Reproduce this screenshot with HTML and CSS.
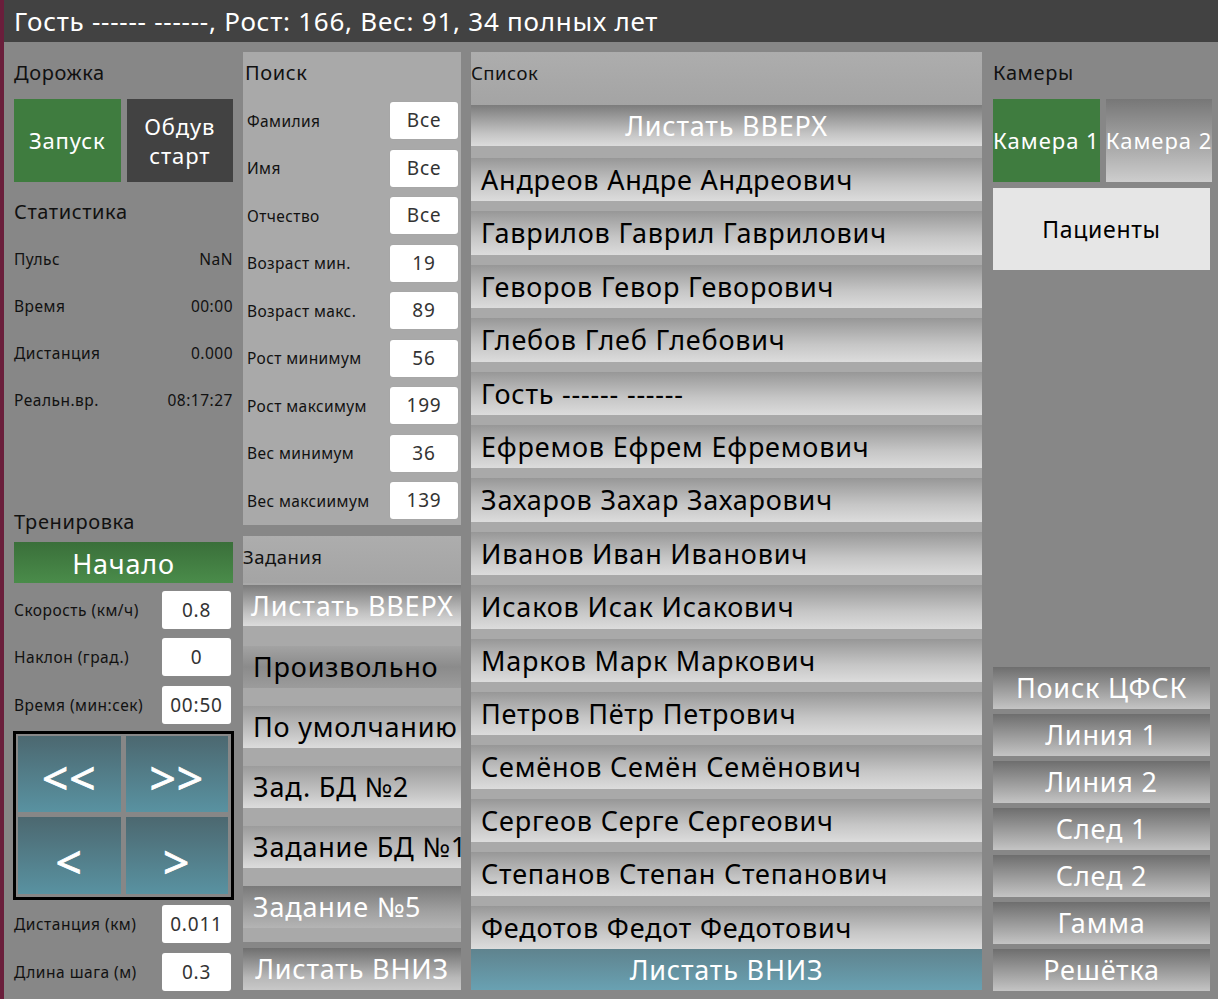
FILE: index.html
```html
<!DOCTYPE html>
<html lang="ru">
<head>
<meta charset="utf-8">
<title>Дорожка</title>
<link rel="stylesheet" href="styles.css">
</head>
<body>
<div class="app">
  <div class="topbar">Гость ------ ------, Рост: 166, Вес: 91, 34 полных лет</div>
  <div class="main">
    <div class="col col1">
      <div class="sect-title">Дорожка</div>
      <div class="btn-pair">
        <div class="btn green">Запуск</div>
        <div class="btn dark">Обдув<br>старт</div>
      </div>
      <div class="sect-title stat-title">Статистика</div>
      <div class="stat"><span>Пульс</span><span>NaN</span></div>
      <div class="stat"><span>Время</span><span>00:00</span></div>
      <div class="stat"><span>Дистанция</span><span>0.000</span></div>
      <div class="stat"><span>Реальн.вр.</span><span>08:17:27</span></div>
      <div class="sect-title train-title">Тренировка</div>
      <div class="start-btn">Начало</div>
      <div class="field"><span>Скорость (км/ч)</span><div class="input">0.8</div></div>
      <div class="field"><span>Наклон (град.)</span><div class="input">0</div></div>
      <div class="field"><span>Время (мин:сек)</span><div class="input">00:50</div></div>
      <div class="pad">
        <div class="pad-btn">&lt;&lt;</div>
        <div class="pad-btn">&gt;&gt;</div>
        <div class="pad-btn low">&lt;</div>
        <div class="pad-btn low">&gt;</div>
      </div>
      <div class="field"><span>Дистанция (км)</span><div class="input">0.011</div></div>
      <div class="field"><span>Длина шага (м)</span><div class="input">0.3</div></div>
    </div>

    <div class="col col2">
      <div class="panel search">
        <div class="panel-title">Поиск</div>
        <div class="srow"><span>Фамилия</span><div class="input">Все</div></div>
        <div class="srow"><span>Имя</span><div class="input">Все</div></div>
        <div class="srow"><span>Отчество</span><div class="input">Все</div></div>
        <div class="srow"><span>Возраст мин.</span><div class="input">19</div></div>
        <div class="srow"><span>Возраст макс.</span><div class="input">89</div></div>
        <div class="srow"><span>Рост минимум</span><div class="input">56</div></div>
        <div class="srow"><span>Рост максимум</span><div class="input">199</div></div>
        <div class="srow"><span>Вес минимум</span><div class="input">36</div></div>
        <div class="srow"><span>Вес максиимум</span><div class="input">139</div></div>
      </div>
      <div class="panel tasks">
        <div class="panel-head">Задания</div>
        <div class="scroll-btn task-up">Листать ВВЕРХ</div>
        <div class="task-items">
          <div class="task dim">Произвольно</div>
          <div class="task">По умолчанию</div>
          <div class="task">Зад. БД №2</div>
          <div class="task">Задание БД №1</div>
          <div class="task dark-task">Задание №5</div>
        </div>
      </div>
      <div class="scroll-btn task-down">Листать ВНИЗ</div>
    </div>

    <div class="col col3">
      <div class="panel-head list-head">Список</div>
      <div class="scroll-btn list-up">Листать ВВЕРХ</div>
      <div class="list">
        <div class="row">Андреов Андре Андреович</div>
        <div class="row">Гаврилов Гаврил Гаврилович</div>
        <div class="row">Геворов Гевор Геворович</div>
        <div class="row">Глебов Глеб Глебович</div>
        <div class="row">Гость ------ ------</div>
        <div class="row">Ефремов Ефрем Ефремович</div>
        <div class="row">Захаров Захар Захарович</div>
        <div class="row">Иванов Иван Иванович</div>
        <div class="row">Исаков Исак Исакович</div>
        <div class="row">Марков Марк Маркович</div>
        <div class="row">Петров Пётр Петрович</div>
        <div class="row">Семёнов Семён Семёнович</div>
        <div class="row">Сергеов Серге Сергеович</div>
        <div class="row">Степанов Степан Степанович</div>
        <div class="row">Федотов Федот Федотович</div>
      </div>
      <div class="list-down">Листать ВНИЗ</div>
    </div>

    <div class="col col4">
      <div class="sect-title">Камеры</div>
      <div class="btn-pair cams">
        <div class="btn green">Камера 1</div>
        <div class="btn grad">Камера 2</div>
      </div>
      <div class="patients">Пациенты</div>
      <div class="tools">
        <div class="tool">Поиск ЦФСК</div>
        <div class="tool">Линия 1</div>
        <div class="tool">Линия 2</div>
        <div class="tool">След 1</div>
        <div class="tool">След 2</div>
        <div class="tool">Гамма</div>
        <div class="tool">Решётка</div>
      </div>
    </div>
  </div>
  <div class="edge-arrow"></div>
</div>
</body>
</html>
```

FILE: styles.css
```css
* { box-sizing: border-box; }
html, body { margin: 0; padding: 0; }
body {
  font-family: "Noto Sans", "Open Sans", "DejaVu Sans", sans-serif;
  background: #878787;
  color: #111;
}
.app {
  position: relative;
  width: 1218px;
  height: 999px;
  border-left: 4px solid #6a1e3b;
  background: #878787;
  overflow: hidden;
}
.topbar {
  height: 42px;
  background: #424242;
  color: #fff;
  font-size: 26px;
  letter-spacing: 0.75px;
  line-height: 42px;
  padding-left: 10px;
  white-space: nowrap;
}
.main {
  display: grid;
  grid-template-columns: 219px 218px 511px 218px;
  column-gap: 10px;
  padding: 10px 0 0 10px;
  height: 957px;
}
.col { display: flex; flex-direction: column; min-width: 0; }

/* column 1 */
.sect-title {
  height: 47px;
  font-size: 20px;
  letter-spacing: 0.6px;
  line-height: 42px;
  white-space: nowrap;
}
.btn-pair {
  display: flex;
  gap: 6px;
  height: 83px;
}
.btn {
  flex: 1;
  display: flex;
  align-items: center;
  justify-content: center;
  text-align: center;
  color: #fff;
  font-size: 22px;
  letter-spacing: 0.9px;
  line-height: 29px;
  white-space: nowrap;
}
.green { background: #3f7c3f; }
.dark { background: #424242; }
.grad { background: linear-gradient(#777777, #cdcdcd); }
.stat-title {
  height: 53px;
  padding-top: 7px;
  line-height: 46px;
}
.stat {
  height: 47px;
  display: flex;
  justify-content: space-between;
  align-items: center;
  font-size: 15.5px;
  letter-spacing: 0.5px;
}
.train-title {
  margin-top: 77px;
  height: 42px;
  line-height: 44px;
}
.start-btn {
  height: 41px;
  background: linear-gradient(#3a6f3a, #4a8c4a);
  color: #fff;
  font-size: 27px;
  letter-spacing: 0.8px;
  line-height: 44px;
  text-align: center;
}
.field {
  height: 47.5px;
  display: flex;
  justify-content: space-between;
  align-items: center;
  font-size: 15.5px;
  letter-spacing: 0.5px;
  white-space: nowrap;
}
.input {
  width: 69px;
  height: 38px;
  background: #fff;
  border-radius: 3px;
  box-shadow: 0 0 1px #9a9a9a;
  color: #333;
  font-size: 19px;
  letter-spacing: 0.8px;
  line-height: 38px;
  text-align: center;
  margin-right: 2px;
}
.start-btn + .field { margin-top: 3px; }
.pad {
  margin: 2px -1px 0 -1px;
  height: 169px;
  border: 3px solid #000;
  padding: 2px 3px 3px 2px;
  display: grid;
  grid-template-columns: 1fr 1fr;
  grid-template-rows: 1fr 1fr;
  gap: 5px;
  background: #878787;
}
.pad-btn {
  background: linear-gradient(#4c6870, #5992a1);
  color: #fff;
  font-size: 46px;
  display: flex;
  align-items: center;
  justify-content: center;
  padding-top: 6px;
  letter-spacing: 1px;
  -webkit-text-stroke: 0.8px #fff;
}
.pad-btn.low { padding-top: 12px; }
.pad + .field { margin-top: 1px; }

/* column 2 */
.panel { background: #a9a9a9; }
.search {
  height: 473px;
  padding: 0 3px 0 4px;
}
.panel-title {
  height: 45px;
  font-size: 20px;
  letter-spacing: 0.6px;
  line-height: 42px;
  margin-left: -2px;
}
.srow {
  height: 47.5px;
  display: flex;
  justify-content: space-between;
  align-items: center;
  font-size: 15.5px;
  letter-spacing: 0.4px;
  white-space: nowrap;
}
.srow .input { width: 68px; height: 37px; line-height: 37px; margin-right: 0; }
.tasks {
  margin-top: 11px;
  height: 406px;
}
.panel-head {
  height: 47px;
  background: linear-gradient(#adadad, #a4a4a4);
  font-size: 18.5px;
  letter-spacing: 0.5px;
  line-height: 42px;
  color: #111;
}
.scroll-btn {
  height: 41px;
  background: linear-gradient(#7c7c7c, #c4c4c4 70%, #dcdcdc);
  color: #fff;
  font-size: 27px;
  letter-spacing: 0.8px;
  line-height: 41px;
  white-space: nowrap;
}
.task-up { margin-top: 2px; padding-left: 8px; }
.task-items {
  display: flex;
  flex-direction: column;
  gap: 18px;
  margin-top: 20px;
}
.task {
  height: 42px;
  background: linear-gradient(#9c9c9c, #c8c8c8 70%, #dcdcdc);
  font-size: 27px;
  letter-spacing: 0.8px;
  line-height: 42px;
  padding-left: 10px;
  white-space: nowrap;
  color: #000;
}
.task.dim { background: linear-gradient(#a3a3a3, #8b8b8b 50%, #9c9c9c); }
.task.dark-task {
  background: linear-gradient(#7a7a7a, #a0a0a0 60%, #b4b4b4);
  color: #fff;
}
.task-down {
  margin-top: 6px;
  height: 42px;
  text-align: center;
  background: linear-gradient(#6f6f6f, #b8b8b8 70%, #c8c8c8);
}

/* column 3 */
.col3 { background: #a9a9a9; height: 938px; }
.list-head {
  height: 53px;
  padding-left: 0;
}
.list-up {
  height: 41px;
  text-align: center;
}
.list {
  margin-top: 12px;
  height: 791px;
  display: grid;
  grid-template-rows: repeat(15, 1fr);
  row-gap: 10px;
}
.row {
  background: linear-gradient(#979797, #c6c6c6 60%, #dcdcdc);
  font-size: 27px;
  letter-spacing: 0.8px;
  line-height: 43px;
  padding-left: 10px;
  white-space: nowrap;
  color: #000;
}
.list-down {
  height: 41px;
  background: linear-gradient(#5f838e, #69a1b2);
  color: #fff;
  font-size: 27px;
  letter-spacing: 0.8px;
  line-height: 41px;
  text-align: center;
}

/* column 4 */
.col4 { margin-left: 1px; }
.cams .btn { white-space: nowrap; font-size: 22px; letter-spacing: 1px; }
.patients {
  margin-top: 6px;
  height: 82px;
  background: #e6e6e6;
  font-size: 23px;
  letter-spacing: 0.7px;
  display: flex;
  align-items: center;
  justify-content: center;
  color: #000;
}
.tools {
  margin-top: auto;
  margin-bottom: 8px;
  display: flex;
  flex-direction: column;
  gap: 5px;
}
.tool {
  height: 42px;
  background: linear-gradient(#6e6e6e, #c4c4c4);
  color: #fff;
  font-size: 27px;
  letter-spacing: 0.8px;
  line-height: 42px;
  text-align: center;
}

.edge-arrow {
  position: absolute;
  left: -4px;
  top: 676px;
  width: 0;
  height: 0;
  border-top: 4px solid transparent;
  border-bottom: 4px solid transparent;
  border-right: 4px solid #fff;
}
```
